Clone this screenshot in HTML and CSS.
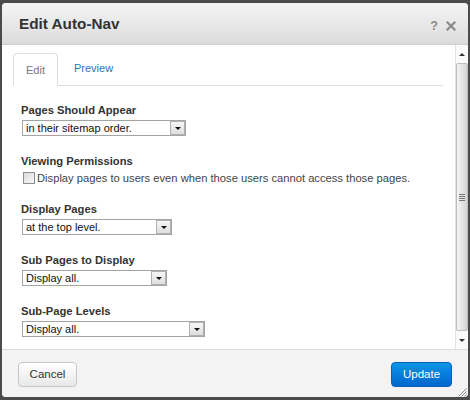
FILE: index.html
```html
<!DOCTYPE html>
<html>
<head>
<meta charset="utf-8">
<title>Edit Auto-Nav</title>
<link rel="stylesheet" href="styles.css">
</head>
<body>
<div class="dialog">
  <div class="titlebar">
    <span class="title">Edit Auto-Nav</span>
    <span class="tools">
      <span class="help">?</span>
      <svg class="close" width="10" height="10" viewBox="0 0 10 10"><path d="M1.5 1.5 L8.5 8.5 M8.5 1.5 L1.5 8.5" stroke="#8a8a8a" stroke-width="2.2" stroke-linecap="square"/></svg>
    </span>
  </div>
  <div class="main">
    <div class="content">
      <div class="tabs">
        <span class="tab active">Edit</span>
        <span class="tab link">Preview</span>
      </div>
      <div class="form">
        <div class="group">
          <div class="label">Pages Should Appear</div>
          <div class="select w1"><span class="val">in their sitemap order.</span><span class="arrow"></span></div>
        </div>
        <div class="group">
          <div class="label">Viewing Permissions</div>
          <div class="check-row"><span class="checkbox"></span><span class="check-text">Display pages to users even when those users cannot access those pages.</span></div>
        </div>
        <div class="group">
          <div class="label">Display Pages</div>
          <div class="select w2"><span class="val">at the top level.</span><span class="arrow"></span></div>
        </div>
        <div class="group">
          <div class="label">Sub Pages to Display</div>
          <div class="select w3"><span class="val">Display all.</span><span class="arrow"></span></div>
        </div>
        <div class="group">
          <div class="label">Sub-Page Levels</div>
          <div class="select w4"><span class="val">Display all.</span><span class="arrow"></span></div>
        </div>
      </div>
    </div>
    <div class="scrollbar">
      <div class="sb-btn"><span class="tri up"></span></div>
      <div class="sb-track"><div class="sb-thumb"><span class="grip"></span></div></div>
      <div class="sb-btn"><span class="tri down"></span></div>
    </div>
  </div>
  <div class="footer">
    <span class="btn cancel">Cancel</span>
    <span class="btn update">Update</span>
    <svg class="resize" width="10" height="10" viewBox="0 0 10 10"><path d="M9.5 1.5 L1.5 9.5 M9.5 4.5 L4.5 9.5 M9.5 7.5 L7.5 9.5" stroke="#8a8a8a" stroke-width="1"/></svg>
  </div>
</div>
</body>
</html>
```

FILE: styles.css
```css
html, body {
  margin: 0;
  padding: 0;
}
body {
  background: #4b4b4b;
  width: 470px;
  height: 400px;
  font-family: "Liberation Sans", Arial, sans-serif;
  overflow: hidden;
}
.dialog {
  position: relative;
  margin: 3px 2px 0 2px;
  width: 466px;
  height: 394px;
  border-radius: 4px;
  overflow: hidden;
  display: flex;
  flex-direction: column;
  background: #fff;
}
.titlebar {
  height: 42px;
  flex: none;
  display: flex;
  align-items: center;
  justify-content: space-between;
  padding: 0 12px 0 17px;
  background: linear-gradient(#f4f4f4, #dcdcdc);
  border-bottom: 1px solid #cfcfcf;
  box-sizing: border-box;
}
.title {
  font-weight: bold;
  font-size: 15.3px;
  color: #333;
  padding-top: 1px;
}
.tools {
  display: flex;
  align-items: center;
  gap: 8px;
  padding-top: 4px;
}
.help {
  font-weight: bold;
  font-size: 12.5px;
  color: #8a8a8a;
}
.close {
  display: block;
}
.main {
  flex: 1;
  display: flex;
  min-height: 0;
}
.content {
  flex: 1;
  padding: 8px 12px 0 11px;
}
.tabs {
  display: flex;
  align-items: flex-end;
  border-bottom: 1px solid #dedede;
  height: 32px;
}
.tab {
  font-size: 11px;
  line-height: 31px;
  height: 32px;
  box-sizing: border-box;
}
.tab.active {
  width: 45px;
  text-align: center;
  color: #777;
  border: 1px solid #dedede;
  border-bottom: none;
  border-radius: 4px 4px 0 0;
  background: #fff;
  margin-bottom: -1px;
  height: 33px;
  line-height: 32px;
}
.tab.link {
  color: #2c72c7;
  margin-left: 16px;
}
.form {
  padding: 16px 0 0 8px;
}
.group {
  margin-bottom: 17px;
}
.label {
  font-weight: bold;
  font-size: 11.2px;
  line-height: 16px;
  height: 16px;
  color: #333;
  margin-bottom: 2px;
}
.select {
  position: relative;
  height: 16px;
  box-sizing: border-box;
  border: 1px solid #a4a4a4;
  margin-left: 1px;
  background: #fff;
  display: flex;
  align-items: center;
}
.w1 { width: 164px; }
.w2 { width: 150px; }
.w3 { width: 145px; }
.w4 { width: 183px; }
.val {
  flex: 1;
  font-size: 11px;
  color: #111;
  padding-left: 3px;
  line-height: 14px;
}
.arrow {
  width: 15px;
  height: 14px;
  box-sizing: border-box;
  border: 1px solid #b0b0b0;
  background: linear-gradient(#f6f6f6, #dedede);
  display: flex;
  align-items: center;
  justify-content: center;
}
.arrow::after {
  content: "";
  border-left: 3px solid transparent;
  border-right: 3px solid transparent;
  border-top: 3px solid #111;
}
.check-row {
  display: flex;
  align-items: center;
  height: 13px;
}
.checkbox {
  width: 12px;
  height: 12px;
  box-sizing: border-box;
  border: 1px solid #8e8e8e;
  background: linear-gradient(135deg, #dcdcdc, #f8f8f8);
  margin-left: 2px;
  margin-right: 2px;
}
.check-text {
  font-size: 11.2px;
  color: #444;
}
.scrollbar {
  width: 13px;
  flex: none;
  display: flex;
  flex-direction: column;
  background: #f1f1f1;
  border-left: 1px solid #e4e4e4;
  box-sizing: border-box;
}
.sb-btn {
  height: 18px;
  flex: none;
  display: flex;
  align-items: center;
  justify-content: center;
  background: #fafafa;
}
.tri {
  width: 0;
  height: 0;
  border-left: 3px solid transparent;
  border-right: 3px solid transparent;
}
.tri.up { border-bottom: 3px solid #333; }
.tri.down { border-top: 3px solid #333; }
.sb-track {
  flex: 1;
  display: flex;
  padding: 0 0 0 0;
}
.sb-thumb {
  flex: 1;
  border: 1px solid #bdbdbd;
  border-radius: 2px;
  background: linear-gradient(90deg, #f4f4f4, #e2e2e2 60%, #d4d4d4);
  display: flex;
  align-items: center;
  justify-content: center;
}
.grip {
  width: 6px;
  height: 7px;
  background: repeating-linear-gradient(#777 0 1px, transparent 1px 2px);
  margin-top: 1px;
}
.footer {
  position: relative;
  height: 48px;
  flex: none;
  background: #f3f3f3;
  border-top: 1px solid #dcdcdc;
  box-sizing: border-box;
  display: flex;
  justify-content: space-between;
  padding: 12px 16px 0 16px;
}
.btn {
  height: 25px;
  box-sizing: border-box;
  border-radius: 4px;
  font-size: 11.5px;
  line-height: 23px;
  text-align: center;
}
.cancel {
  width: 59px;
  border: 1px solid #c6c6c6;
  background: linear-gradient(#ffffff, #e8e8e8);
  color: #333;
}
.update {
  width: 61px;
  border: 1px solid #0a5fb4;
  background: linear-gradient(#0d95e8, #0066cc);
  color: #fff;
}
.resize {
  position: absolute;
  right: 1px;
  bottom: 0;
}
```
